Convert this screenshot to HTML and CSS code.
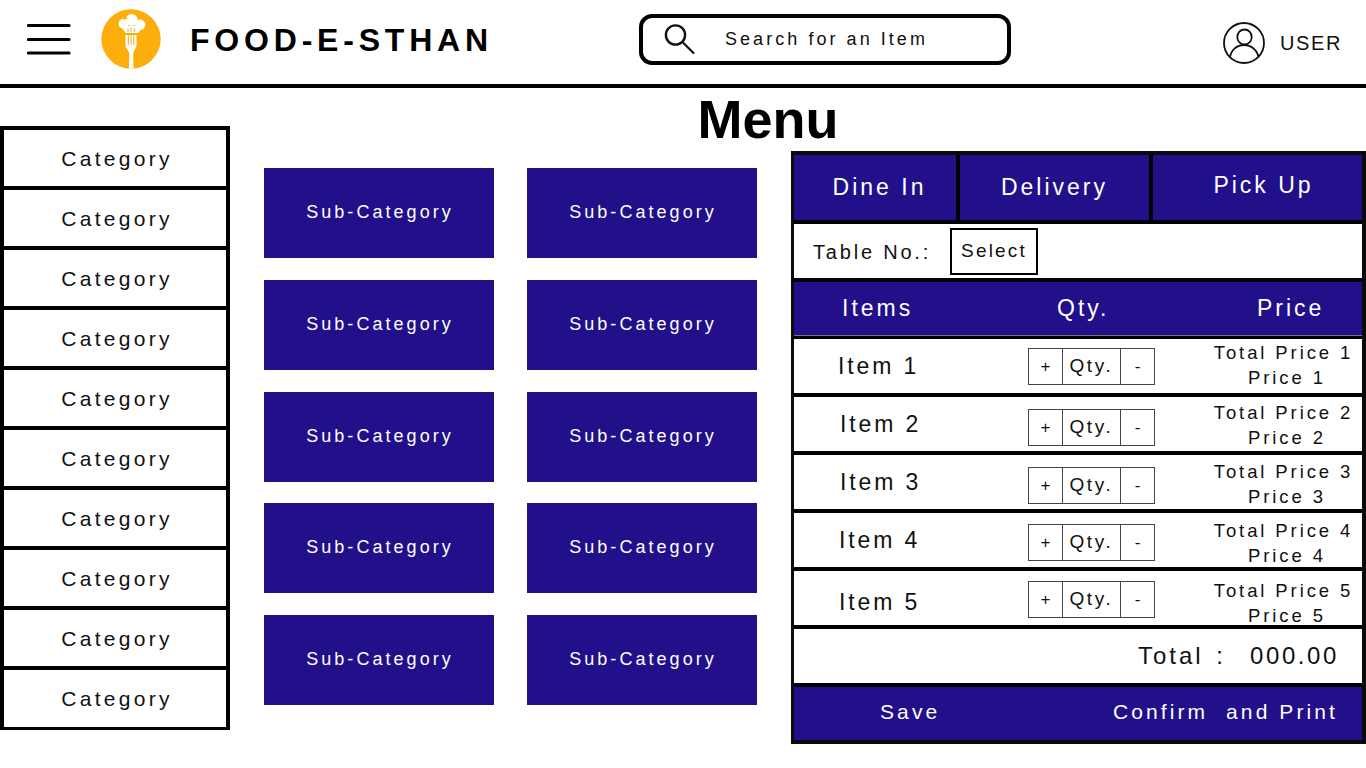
FILE: index.html
```html
<!DOCTYPE html>
<html lang="en">
<head>
<meta charset="utf-8">
<title>Food-E-Sthan Menu</title>
<link rel="stylesheet" href="styles.css">
</head>
<body>
<header class="topbar">
  <div class="brand">
    <svg class="burger" viewBox="0 0 44 32" width="44" height="32"><path d="M1.500 2.500H42M1.500 16.500H42M1.500 30H42" stroke="#000" stroke-width="3.200" stroke-linecap="round" fill="none"/></svg>
    <svg class="logo" viewBox="0 0 60 60" width="60" height="60">
      <circle cx="30" cy="30" r="29.700" fill="#fcae0c"/>
      <g fill="#fff">
        <circle cx="22.500" cy="14.700" r="5"/>
        <circle cx="30.700" cy="11" r="6"/>
        <circle cx="39" cy="15.700" r="5.300"/>
        <path d="M20 17H42L37.500 24H24.500z"/>
        <path d="M24.500 26H35.500V36c0 3.500-2.700 5-3.300 8L32.500 59.500H28L28.300 44c-.8-3-3.800-4.500-3.800-8z"/>
      </g>
      <path d="M27.300 26V36M30 26V36M32.700 26V36" stroke="#fcae0c" stroke-width="1" fill="none"/>
      <path d="M27 23V19.500M30 23V18.500M33.500 23V19.500" stroke="#e9a63a" stroke-width="1" fill="none"/>
      <path d="M23 11c1.500-1.500 3-2 4.500-1.500" stroke="#fcae0c" stroke-width=".8" fill="none"/>
    </svg>
    <span class="wordmark">FOOD-E-STHAN</span>
  </div>
  <div class="search">
    <svg class="search-icon" viewBox="0 0 32 32" width="32" height="32"><circle cx="11.500" cy="11" r="9.600" fill="none" stroke="#111" stroke-width="2.400"/><path d="M18.500 18l11 11" stroke="#111" stroke-width="2.200" stroke-linecap="round"/></svg>
    <span class="search-text">Search for an Item</span>
  </div>
  <div class="user">
    <svg viewBox="0 0 42 44" width="42" height="44"><circle cx="21" cy="22" r="20" fill="none" stroke="#111" stroke-width="1.800"/><ellipse cx="21.500" cy="16" rx="7.200" ry="7.500" fill="none" stroke="#111" stroke-width="1.800"/><path d="M7 36.500c1-7.500 7-12.500 14-12.500s13.500 5 14.500 12.500" fill="none" stroke="#111" stroke-width="1.800"/></svg>
    <span class="user-name">USER</span>
  </div>
</header>

<h1 class="title">Menu</h1>

<main class="content">
  <nav class="categories">
    <div class="category">Category</div>
    <div class="category">Category</div>
    <div class="category">Category</div>
    <div class="category">Category</div>
    <div class="category">Category</div>
    <div class="category">Category</div>
    <div class="category">Category</div>
    <div class="category">Category</div>
    <div class="category">Category</div>
    <div class="category">Category</div>
  </nav>

  <section class="subgrid">
    <div class="sub">Sub-Category</div><div class="sub">Sub-Category</div>
    <div class="sub">Sub-Category</div><div class="sub">Sub-Category</div>
    <div class="sub">Sub-Category</div><div class="sub">Sub-Category</div>
    <div class="sub">Sub-Category</div><div class="sub">Sub-Category</div>
    <div class="sub">Sub-Category</div><div class="sub">Sub-Category</div>
  </section>

  <aside class="order">
    <div class="tabs">
      <div class="tab tab-dine">Dine In</div>
      <div class="tab tab-delivery">Delivery</div>
      <div class="tab tab-pickup">Pick Up</div>
    </div>
    <div class="table-row">
      <span class="table-label">Table No.:</span>
      <span class="select">Select</span>
    </div>
    <div class="heads">
      <span class="head-items">Items</span>
      <span class="head-qty">Qty.</span>
      <span class="head-price">Price</span>
    </div>
    <div class="line line-1">
      <span class="item-name">Item 1</span>
      <div class="qty"><span class="qty-btn">+</span><span class="qty-val">Qty.</span><span class="qty-btn">-</span></div>
      <div class="price"><span>Total Price 1</span><span class="price-unit">Price 1</span></div>
    </div>
    <div class="line line-2">
      <span class="item-name">Item 2</span>
      <div class="qty"><span class="qty-btn">+</span><span class="qty-val">Qty.</span><span class="qty-btn">-</span></div>
      <div class="price"><span>Total Price 2</span><span class="price-unit">Price 2</span></div>
    </div>
    <div class="line line-3">
      <span class="item-name">Item 3</span>
      <div class="qty"><span class="qty-btn">+</span><span class="qty-val">Qty.</span><span class="qty-btn">-</span></div>
      <div class="price"><span>Total Price 3</span><span class="price-unit">Price 3</span></div>
    </div>
    <div class="line line-4">
      <span class="item-name">Item 4</span>
      <div class="qty"><span class="qty-btn">+</span><span class="qty-val">Qty.</span><span class="qty-btn">-</span></div>
      <div class="price"><span>Total Price 4</span><span class="price-unit">Price 4</span></div>
    </div>
    <div class="line line-5">
      <span class="item-name">Item 5</span>
      <div class="qty"><span class="qty-btn">+</span><span class="qty-val">Qty.</span><span class="qty-btn">-</span></div>
      <div class="price"><span>Total Price 5</span><span class="price-unit">Price 5</span></div>
    </div>
    <div class="total"><span class="total-label">Total :</span><span class="total-value">000.00</span></div>
    <div class="actions">
      <span class="save">Save</span>
      <span class="confirm">Confirm&nbsp; and Print</span>
    </div>
  </aside>
</main>
</body>
</html>
```
FILE: styles.css
```css
* { box-sizing: border-box; }
html, body { margin: 0; padding: 0; }
body {
  width: 1366px;
  height: 768px;
  overflow: hidden;
  background: #fff;
  color: #111;
  font-family: "Liberation Sans", Arial, sans-serif;
}

.topbar {
  height: 88px;
  border-bottom: 4px solid #000;
  display: flex;
  align-items: flex-start;
}
.brand {
  width: 639px;
  display: flex;
  align-items: center;
  height: 84px;
  padding-left: 27px;
}
.burger { margin-top: -6px; }
.logo { margin-left: 30px; margin-top: -6px; }
.wordmark {
  margin-left: 29px;
  margin-bottom: 4px;
  font-size: 32px;
  font-weight: 700;
  letter-spacing: 4.800px;
  color: #000;
}
.search {
  margin-top: 14px;
  width: 372px;
  height: 51px;
  border: 4px solid #000;
  border-radius: 13px;
  display: flex;
  align-items: center;
  padding-left: 21px;
}
.search-icon { margin-top: 1px; }
.search-text {
  margin-left: 29px;
  font-size: 18px;
  letter-spacing: 3.050px;
}
.user {
  margin-top: 21px;
  margin-left: 212px;
  display: flex;
  align-items: center;
}
.user-name {
  margin-left: 15px;
  font-size: 20px;
  letter-spacing: 1.600px;
}

.title {
  margin: 0;
  height: 38px;
  padding-left: 170px;
  font-size: 54px;
  line-height: 62px;
  font-weight: 700;
  text-align: center;
  color: #000;
}

.content { display: flex; align-items: flex-start; }

.categories {
  width: 230px;
  height: 604px;
  border: 4px solid #000;
  border-bottom-width: 3px;
  display: flex;
  flex-direction: column;
}
.category {
  height: 60px;
  flex: none;
  border-bottom: 4px solid #000;
  display: flex;
  align-items: center;
  justify-content: center;
  font-size: 21px;
  letter-spacing: 3.300px;
  padding: 1px 0 0 4px;
  color: #111;
}
.category:last-child { border-bottom: 0; height: 57px; }

.subgrid {
  margin: 42px 0 0 34px;
  width: 493px;
  display: grid;
  grid-template-columns: 230px 230px;
  grid-auto-rows: 90px;
  column-gap: 33px;
  row-gap: 21.750px;
}
.sub {
  background: #22108a;
  color: #fff;
  display: flex;
  align-items: center;
  justify-content: center;
  font-size: 18px;
  letter-spacing: 3.050px;
  padding: 0 0 1px 2px;
}

.order {
  margin: 25px 0 0 34px;
  width: 575px;
  height: 593px;
  background: #000;
  border: 4px solid #0a0a0a;
  border-width: 4px 4px 4px 3px;
  display: flex;
  flex-direction: column;
  gap: 4px;
}

.tabs { height: 65px; display: flex; gap: 4px; flex: none; }
.tab {
  background: #22108a;
  color: #fff;
  display: flex;
  align-items: center;
  justify-content: center;
  font-size: 23px;
  letter-spacing: 3px;
}
.tab-dine { width: 162px; padding: 0 0 0 9px; }
.tab-delivery { width: 189px; }
.tab-pickup { flex: 1; padding: 0 0 5px 12px; }

.table-row {
  height: 54px;
  flex: none;
  background: #fff;
  display: flex;
  align-items: center;
  padding-left: 19px;
}
.table-label { font-size: 20px; letter-spacing: 2.800px; padding-top: 3px; }
.select {
  margin-left: 19px;
  width: 88px;
  height: 47px;
  border: 2px solid #000;
  display: flex;
  align-items: center;
  justify-content: center;
  font-size: 19px;
  letter-spacing: 2.200px;
  padding-bottom: 1px;
}

.heads {
  height: 54px;
  flex: none;
  margin-bottom: -1px;
  background: #22108a;
  border-bottom: 1px solid #777;
  color: #fff;
  display: flex;
  align-items: center;
  font-size: 23px;
  letter-spacing: 3px;
}
.head-items { margin-left: 48px; width: 215px; }
.head-qty { width: 200px; }

.line {
  height: 54px;
  flex: none;
  background: #fff;
  display: flex;
  align-items: center;
}
.item-name {
  width: 234px;
  padding-left: 45px;
  font-size: 23px;
  letter-spacing: 2.900px;
}
.line-1 .item-name { padding-left: 44px; }
.line-2 .item-name, .line-3 .item-name { padding-left: 46px; }
.qty {
  width: 127px;
  height: 37px;
  border: 1px solid #444;
  display: flex;
  align-items: stretch;
}
.qty-btn {
  width: 33px;
  display: flex;
  align-items: center;
  justify-content: center;
  font-size: 17px;
  padding-top: 1px;
}
.qty-val {
  width: 60px;
  border-left: 1px solid #444;
  border-right: 1px solid #444;
  display: flex;
  align-items: center;
  justify-content: center;
  font-size: 19px;
  letter-spacing: 2.700px;
}
.price {
  flex: 1;
  display: flex;
  flex-direction: column;
  align-items: center;
  padding-left: 50px;
  font-size: 18.500px;
  letter-spacing: 2.900px;
  line-height: 25px;
}
.price-unit { padding-left: 7px; }

.line-1 .price { margin-bottom: 2px; }
.line-2 .qty, .line-3 .qty { margin-top: 6px; }
.line-2 .price { margin-top: 2px; }
.line-3 .price { margin-top: 4px; }
.line-4 .qty { margin-top: 4px; }
.line-4 .price { margin-top: 6px; }
.line-5 .qty { margin-top: 2px; }
.line-5 .price { margin-top: 10px; }
.line-5 .item-name { padding-top: 8px; }

.total {
  height: 54px;
  flex: none;
  background: #fff;
  display: flex;
  justify-content: flex-end;
  align-items: center;
  gap: 24px;
  padding-right: 23px;
  font-size: 24px;
}
.total-label { letter-spacing: 3px; word-spacing: 3px; }
.total-value { letter-spacing: 2.600px; }

.actions {
  flex: 1;
  background: #22108a;
  color: #fff;
  display: flex;
  align-items: center;
  font-size: 21px;
  letter-spacing: 3.100px;
  padding-bottom: 3px;
}
.save { margin-left: 86px; width: 233px; }
```
